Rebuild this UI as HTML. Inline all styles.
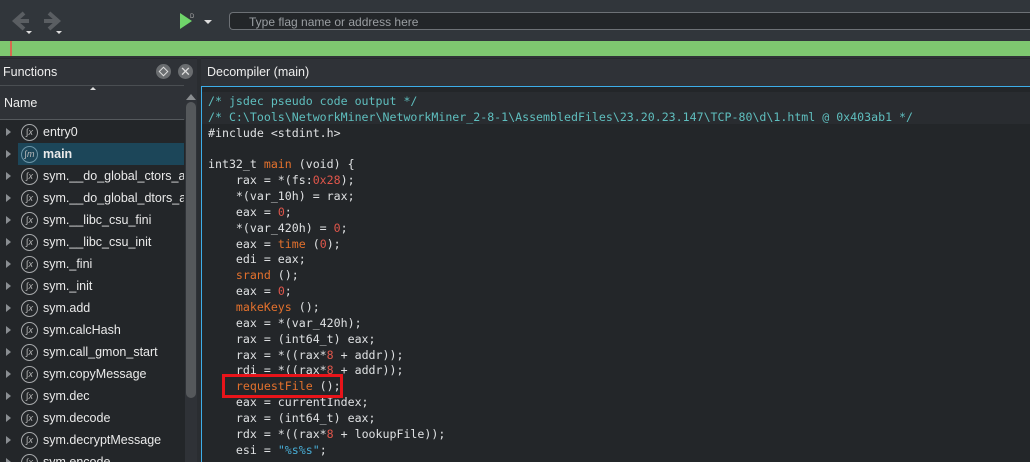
<!DOCTYPE html>
<html><head><meta charset="utf-8"><style>
*{margin:0;padding:0;box-sizing:border-box}
html,body{width:1030px;height:462px;overflow:hidden}
body{background:#2f3237;font-family:"Liberation Sans",sans-serif;color:#e6e6e6;position:relative}
.abs{position:absolute}
#tb{left:0;top:0;width:1030px;height:41px;background:#31363b}
#search{left:229px;top:12px;width:801px;height:18px;border:1px solid #6d7176;border-right:none;border-radius:4px 0 0 4px;background:#232629;font-size:12px;color:#9a9ea2;padding:2px 0 0 19px}
#green{left:0;top:41px;width:1030px;height:15px;background:#7ec870}
#red{left:10px;top:41px;width:2px;height:15px;background:#d86a50}
.hdr{font-size:12.5px;color:#eee}
#list{left:0;top:120px;width:185px;height:342px;background:#232629}
.row{position:absolute;left:0;height:22px;width:184px;font-size:12.5px;color:#eaeaea;overflow:hidden;white-space:nowrap}
.row .t{position:absolute;left:43px;top:4px}
.row .ar{position:absolute;left:6px;top:7px;width:0;height:0;border-left:5px solid #8a8e92;border-top:4px solid transparent;border-bottom:4px solid transparent}
.row .ic{position:absolute;left:21px;top:3px;width:17px;height:17px;border:1.5px solid #a7a9ab;border-radius:50%;font-size:9px;color:#bbb;text-align:center;line-height:14px;font-style:italic}
#code{left:201px;top:86px;width:829px;height:376px;background:#232629;border:1px solid #3daee9;border-right:none;border-bottom:none}
pre{position:absolute;left:6px;top:7px;font-family:"DejaVu Sans Mono","Liberation Mono",monospace;font-size:11.6px;line-height:15.85px;color:#dfe1e3}
.c{color:#5fbfbf}.k{color:#e3712d}.n{color:#e0564b}.s{color:#48aed6}
</style></head><body>
<div id="tb" class="abs"></div>
<svg class="abs" style="left:6px;top:10px" width="60" height="26"><path d="M18 3 L9 11 L18 19 M9 11 H23" stroke="#5a5e62" stroke-width="4" fill="none"/><path d="M20 21 h6 l-3 3z" fill="#ddd"/><path d="M43 3 L52 11 L43 19 M52 11 H38" stroke="#5a5e62" stroke-width="4" fill="none"/><path d="M50 21 h6 l-3 3z" fill="#ddd"/></svg>
<svg class="abs" style="left:178px;top:11px" width="40" height="20"><path d="M2 2 L14 10 L2 18Z" fill="#6fd46a"/><text x="12" y="7" font-size="6" fill="#aaa" font-family="Liberation Sans">D</text><path d="M26 9 h8 l-4 4z" fill="#ddd"/></svg>
<div id="search" class="abs">Type flag name or address here</div>
<div id="green" class="abs"></div><div id="red" class="abs"></div>
<div class="abs" style="left:0;top:58px;width:1030px;height:1px;background:#26292c"></div>
<div class="abs hdr" style="left:3px;top:65px">Functions</div>
<div class="abs" style="left:156px;top:64px;width:15px;height:15px;border-radius:50%;background:#6a6d70"></div>
<div class="abs" style="left:160px;top:68px;width:7px;height:7px;border:1.5px solid #ddd;transform:rotate(45deg)"></div>
<div class="abs" style="left:178px;top:64px;width:15px;height:15px;border-radius:50%;background:#6a6d70;color:#ddd;font-size:13px;line-height:15px;text-align:center">✕</div>
<div class="abs" style="left:197px;top:58px;width:4px;height:404px;background:#2a2d31"></div>
<div class="abs hdr" style="left:207px;top:65px">Decompiler (main)</div>
<div class="abs" style="left:0;top:85px;width:184px;height:1px;background:#4a4e52"></div>
<div class="abs" style="left:90px;top:87px;width:0;height:0;border-bottom:3px solid #ddd;border-left:3px solid transparent;border-right:3px solid transparent"></div>
<div class="abs hdr" style="left:4px;top:96px;font-size:12.5px">Name</div>
<div class="abs" style="left:0;top:119px;width:184px;height:1px;background:#55595d"></div>
<div id="list" class="abs"></div>
<div class="abs" style="left:186px;top:90px;width:11px;height:372px;background:#2f3237"></div>
<div class="abs" style="left:186px;top:94px;width:0;height:0;border-bottom:6px solid #8a8d90;border-left:5px solid transparent;border-right:5px solid transparent"></div>
<div class="abs" style="left:186px;top:102px;width:10px;height:296px;border-radius:5px;background:#55585b"></div>
<div class="abs" style="left:18px;top:143px;width:166px;height:22px;background:#1c4659"></div>
<div class="row" style="top:121px"><span class="ar"></span><span class="ic">∫x</span><span class="t">entry0</span></div>
<div class="row" style="top:143px"><span class="ar"></span><span class="ic" style="border-color:#6d96a8">∫m</span><span class="t" style="font-weight:bold">main</span></div>
<div class="row" style="top:165px"><span class="ar"></span><span class="ic">∫x</span><span class="t">sym.__do_global_ctors_aux</span></div>
<div class="row" style="top:187px"><span class="ar"></span><span class="ic">∫x</span><span class="t">sym.__do_global_dtors_aux</span></div>
<div class="row" style="top:209px"><span class="ar"></span><span class="ic">∫x</span><span class="t">sym.__libc_csu_fini</span></div>
<div class="row" style="top:231px"><span class="ar"></span><span class="ic">∫x</span><span class="t">sym.__libc_csu_init</span></div>
<div class="row" style="top:253px"><span class="ar"></span><span class="ic">∫x</span><span class="t">sym._fini</span></div>
<div class="row" style="top:275px"><span class="ar"></span><span class="ic">∫x</span><span class="t">sym._init</span></div>
<div class="row" style="top:297px"><span class="ar"></span><span class="ic">∫x</span><span class="t">sym.add</span></div>
<div class="row" style="top:319px"><span class="ar"></span><span class="ic">∫x</span><span class="t">sym.calcHash</span></div>
<div class="row" style="top:341px"><span class="ar"></span><span class="ic">∫x</span><span class="t">sym.call_gmon_start</span></div>
<div class="row" style="top:363px"><span class="ar"></span><span class="ic">∫x</span><span class="t">sym.copyMessage</span></div>
<div class="row" style="top:385px"><span class="ar"></span><span class="ic">∫x</span><span class="t">sym.dec</span></div>
<div class="row" style="top:407px"><span class="ar"></span><span class="ic">∫x</span><span class="t">sym.decode</span></div>
<div class="row" style="top:429px"><span class="ar"></span><span class="ic">∫x</span><span class="t">sym.decryptMessage</span></div>
<div class="row" style="top:451px"><span class="ar"></span><span class="ic">∫x</span><span class="t">sym.encode</span></div>
<div class="abs" style="left:185px;top:117px;width:1px;height:345px;background:#2f3237"></div>
<div id="code" class="abs">
<div class="abs" style="left:0;top:5px;width:829px;height:32px;background:#292c30"></div>
<pre><span class="c">/* jsdec pseudo code output */
/* C:\Tools\NetworkMiner\NetworkMiner_2-8-1\AssembledFiles\23.20.23.147\TCP-80\d\1.html @ 0x403ab1 */</span>
#include &lt;stdint.h&gt;

int32_t <span class="k">main</span> (void) {
    rax = *(fs:<span class="n">0x28</span>);
    *(var_10h) = rax;
    eax = <span class="n">0</span>;
    *(var_420h) = <span class="n">0</span>;
    eax = <span class="k">time</span> (<span class="n">0</span>);
    edi = eax;
    <span class="k">srand</span> ();
    eax = <span class="n">0</span>;
    <span class="k">makeKeys</span> ();
    eax = *(var_420h);
    rax = (int64_t) eax;
    rax = *((rax*<span class="n">8</span> + addr));
    rdi = *((rax*<span class="n">8</span> + addr));
    <span class="k">requestFile</span> ();
    eax = currentIndex;
    rax = (int64_t) eax;
    rdx = *((rax*<span class="n">8</span> + lookupFile));
    esi = <span class="s">"%s%s"</span>;</pre>
</div>
<div class="abs" style="left:222px;top:374px;width:121px;height:24px;border:3px solid #e8141a"></div>
</body></html>
